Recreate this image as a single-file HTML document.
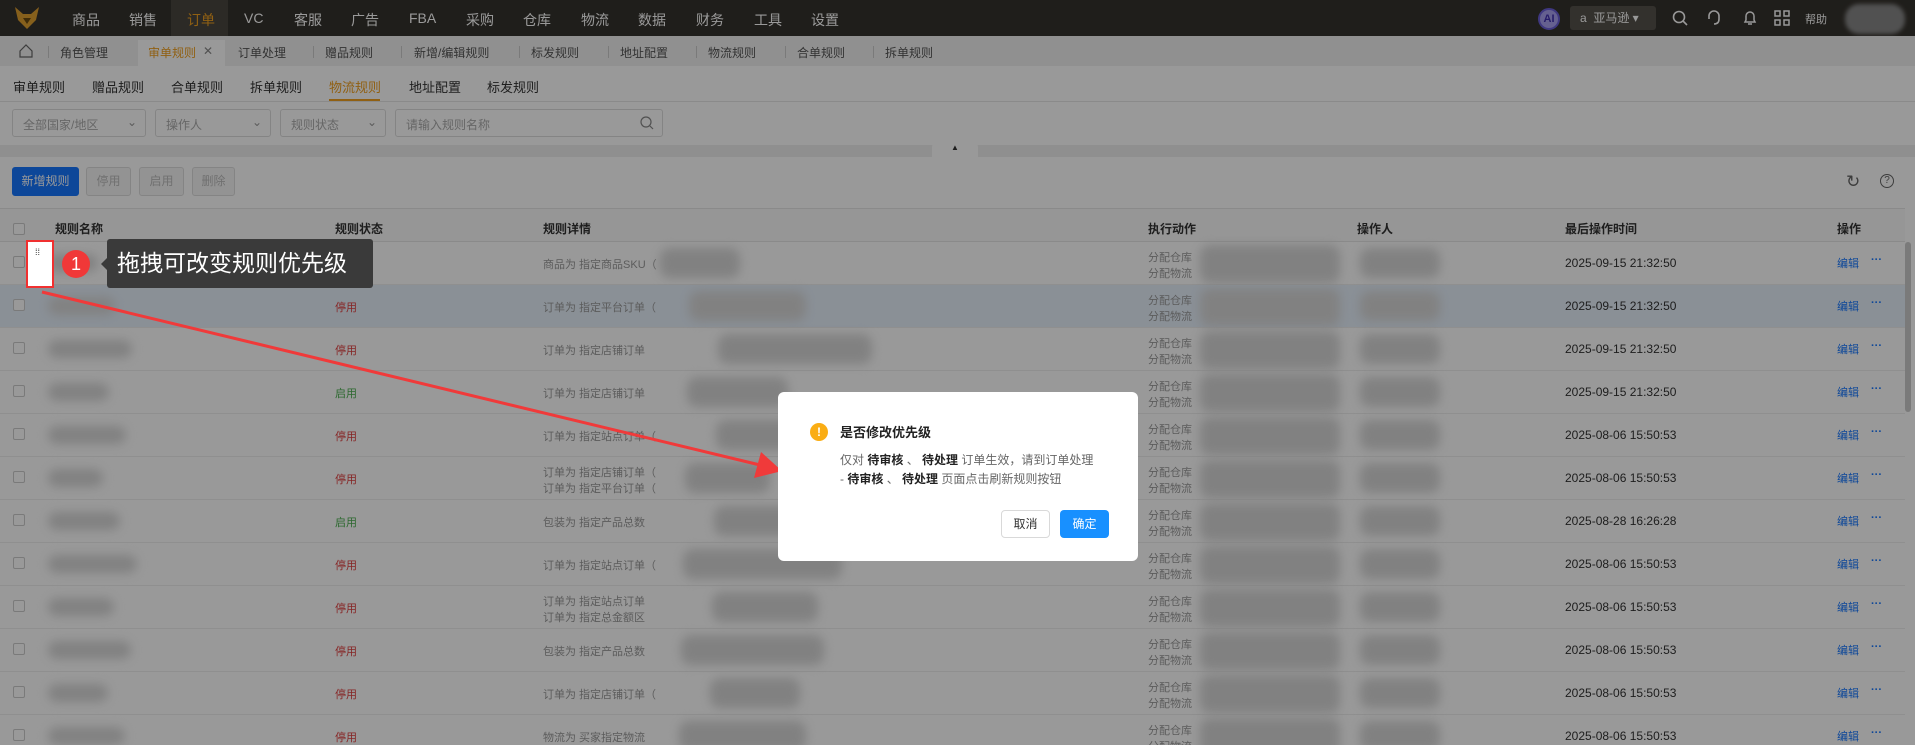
<!DOCTYPE html>
<html><head><meta charset="utf-8">
<style>
*{box-sizing:border-box;margin:0;padding:0}
html,body{width:1915px;height:745px;overflow:hidden}
body{position:relative;background:#fff;font-family:"Liberation Sans","Noto Sans CJK SC",sans-serif;font-size:12px;color:#333}
.a{position:absolute;white-space:nowrap}
.top{position:absolute;left:0;top:0;width:1915px;height:36px;background:#35322d}
.top .n{position:absolute;top:10px;color:#fff;font-size:14px}
.tabs{position:absolute;left:0;top:36px;width:1915px;height:30px;background:#f0f0f0}
.tabs .t{position:absolute;top:8px;color:#555;font-size:12px}
.sep{position:absolute;top:10px;width:1px;height:12px;background:#ccc}
.sub .t{position:absolute;top:77px;font-size:13px;color:#333}
.sel{position:absolute;top:109px;height:28px;border:1px solid #ddd;border-radius:3px;background:#fff;color:#aaa;font-size:12px;padding:6px 10px}
.btn{position:absolute;top:167px;height:29px;border:1px solid #ddd;border-radius:3px;background:#f5f5f5;color:#bbb;font-size:12px;text-align:center;line-height:27px}
.hd{position:absolute;top:208px;left:0;width:1905px;height:34px;background:#fafafa;border-top:1px solid #e6e6e6;border-bottom:1px solid #e6e6e6}
.hd span{position:absolute;top:11px;font-weight:bold;font-size:12px;color:#333}
.row{position:absolute;left:0;width:1905px;height:43px;border-bottom:1px solid #eee}
.row .cb,.hd .cb{position:absolute;left:13px;top:14px;width:12px;height:12px;border:1px solid #ccc;border-radius:2px;background:#fff}
.row span{position:absolute;font-size:11px;color:#999}
.blur{position:absolute;background:#d8d8d8;filter:blur(5px);border-radius:10px}
.mask{position:absolute;left:0;top:0;width:1915px;height:745px;background:rgba(0,0,0,0.4)}
</style></head><body>
<div class="top">
 <svg class="a" style="left:14px;top:6px" width="26" height="24" viewBox="0 0 26 24"><path d="M1 1 L9 8 L17 8 L25 1 L22 14 L13 23 L4 14 Z" fill="#e0a030"/><path d="M9 12 L13 18 L17 12" fill="#6a4a10"/></svg>
 <div class="a" style="left:171px;top:0;width:57px;height:36px;background:#4a4640"></div>
 <span class="n" style="left:72px">商品</span><span class="n" style="left:129px">销售</span><span class="n" style="left:187px;color:#f0a020">订单</span><span class="n" style="left:244px">VC</span><span class="n" style="left:294px">客服</span><span class="n" style="left:351px">广告</span><span class="n" style="left:409px">FBA</span><span class="n" style="left:466px">采购</span><span class="n" style="left:523px">仓库</span><span class="n" style="left:581px">物流</span><span class="n" style="left:638px">数据</span><span class="n" style="left:696px">财务</span><span class="n" style="left:754px">工具</span><span class="n" style="left:811px">设置</span>
 <div class="a" style="left:1538px;top:8px;width:22px;height:22px;border-radius:50%;background:#a8a0f0;border:2px solid #6a5ed8;color:#4030b0;font-size:11px;font-weight:bold;text-align:center;line-height:18px">AI</div>
 <div class="a" style="left:1570px;top:6px;width:86px;height:24px;background:#56524c;border-radius:3px;color:#fff;font-size:12px;line-height:24px;padding-left:10px">a&nbsp; 亚马逊 ▾</div>
 <svg class="a" style="left:1672px;top:10px" width="16" height="16"><circle cx="7" cy="7" r="5.5" fill="none" stroke="#fff" stroke-width="1.6"/><path d="M11 11 L15 15" stroke="#fff" stroke-width="1.6"/></svg>
 <svg class="a" style="left:1706px;top:9px" width="16" height="18"><path d="M3 10 V7 A5 5 0 0 1 13 7 V10 M13 10 Q13 15 8 15" fill="none" stroke="#fff" stroke-width="1.6"/></svg>
 <svg class="a" style="left:1742px;top:9px" width="16" height="18"><path d="M3 13 H13 L12 11 V7 A4 4 0 0 0 4 7 V11 Z M6 15 H10" fill="none" stroke="#fff" stroke-width="1.5"/></svg>
 <svg class="a" style="left:1774px;top:10px" width="16" height="16" fill="none" stroke="#fff" stroke-width="1.5"><rect x="1" y="1" width="5" height="5"/><rect x="10" y="1" width="5" height="5"/><rect x="1" y="10" width="5" height="5"/><rect x="10" y="10" width="5" height="5"/></svg>
 <span class="n" style="left:1805px;top:11px;font-size:11px">帮助</span>
 <div class="a" style="left:1845px;top:4px;width:60px;height:30px;border-radius:14px;background:#888;filter:blur(2px)"></div>
</div>
<div class="tabs">
 <svg class="a" style="left:19px;top:8px" width="14" height="14"><path d="M1 7 L7 1 L13 7 V13 H1 Z" fill="none" stroke="#666" stroke-width="1.2"/></svg>
 <div class="sep" style="left:48px"></div>
 <span class="t" style="left:60px">角色管理</span>
 <div class="a" style="left:138px;top:4px;width:87px;height:26px;background:#fff"></div>
 <span class="t" style="left:148px;color:#f0a020">审单规则</span><span class="t" style="left:203px;color:#888">✕</span>
 <span class="t" style="left:238px">订单处理</span><div class="sep" style="left:313px"></div>
 <span class="t" style="left:325px">赠品规则</span><div class="sep" style="left:401px"></div>
 <span class="t" style="left:414px">新增/编辑规则</span><div class="sep" style="left:519px"></div>
 <span class="t" style="left:531px">标发规则</span><div class="sep" style="left:608px"></div>
 <span class="t" style="left:620px">地址配置</span><div class="sep" style="left:696px"></div>
 <span class="t" style="left:708px">物流规则</span><div class="sep" style="left:785px"></div>
 <span class="t" style="left:797px">合单规则</span><div class="sep" style="left:873px"></div>
 <span class="t" style="left:885px">拆单规则</span>
</div>
<div class="sub">
 <span class="t" style="left:13px">审单规则</span><span class="t" style="left:92px">赠品规则</span><span class="t" style="left:171px">合单规则</span><span class="t" style="left:250px">拆单规则</span><span class="t" style="left:329px;color:#f0a020">物流规则</span><span class="t" style="left:409px">地址配置</span><span class="t" style="left:487px">标发规则</span>
 <div class="a" style="left:329px;top:99px;width:51px;height:2px;background:#f0a020"></div>
 <div class="a" style="left:0;top:101px;width:1915px;height:1px;background:#e6e6e6"></div>
</div>
<div class="sel" style="left:12px;width:134px">全部国家/地区<span class="a" style="right:8px;top:5px;color:#999">⌄</span></div>
<div class="sel" style="left:155px;width:116px">操作人<span class="a" style="right:8px;top:5px;color:#999">⌄</span></div>
<div class="sel" style="left:280px;width:106px">规则状态<span class="a" style="right:8px;top:5px;color:#999">⌄</span></div>
<div class="sel" style="left:395px;width:268px">请输入规则名称
 <svg class="a" style="right:8px;top:6px" width="14" height="14"><circle cx="6" cy="6" r="5" fill="none" stroke="#888" stroke-width="1.2"/><path d="M10 10 L13 13" stroke="#888" stroke-width="1.2"/></svg></div>
<div class="a" style="left:0;top:145px;width:1915px;height:12px;background:#eeeeee"></div>
<div class="a" style="left:932px;top:143px;width:46px;height:14px;background:#fff;border-radius:4px 4px 0 0;color:#333;font-size:8px;text-align:center">▲</div>
<div class="btn" style="left:12px;width:67px;background:#1677ff;border-color:#1677ff;color:#fff">新增规则</div>
<div class="btn" style="left:86px;width:45px">停用</div>
<div class="btn" style="left:139px;width:45px">启用</div>
<div class="btn" style="left:192px;width:43px">删除</div>
<div class="a" style="left:1846px;top:172px;font-size:17px;color:#666">↻</div>
<div class="a" style="left:1880px;top:174px;width:14px;height:14px;border:1.3px solid #666;border-radius:50%;font-size:10px;text-align:center;line-height:12px;color:#666">?</div>
<div class="hd"><div class="cb"></div>
 <span style="left:55px">规则名称</span><span style="left:335px">规则状态</span><span style="left:543px">规则详情</span><span style="left:1148px">执行动作</span><span style="left:1357px">操作人</span><span style="left:1565px">最后操作时间</span><span style="left:1837px">操作</span></div>
<div id="rows"></div>
<script>
var d=[["","商品为 指定商品SKU（","2025-09-15 21:32:50"],["停用","订单为 指定平台订单（","2025-09-15 21:32:50"],["停用","订单为 指定店铺订单","2025-09-15 21:32:50"],["启用","订单为 指定店铺订单","2025-09-15 21:32:50"],["停用","订单为 指定站点订单（","2025-08-06 15:50:53"],["停用","订单为 指定店铺订单（|订单为 指定平台订单（","2025-08-06 15:50:53"],["启用","包装为 指定产品总数","2025-08-28 16:26:28"],["停用","订单为 指定站点订单（","2025-08-06 15:50:53"],["停用","订单为 指定站点订单|订单为 指定总金额区","2025-08-06 15:50:53"],["停用","包装为 指定产品总数","2025-08-06 15:50:53"],["停用","订单为 指定店铺订单（","2025-08-06 15:50:53"],["停用","物流为 买家指定物流","2025-08-06 15:50:53"]];
var h="";
d.forEach(function(r,i){var y=242+i*43;var det=r[1].split("|");
h+='<div class="row" style="top:'+y+'px;'+(i==1?'background:#e6f0fb':'')+'"><div class="cb"></div>';
h+='<div class="blur" style="left:48px;top:12px;width:'+(50+(i*17)%40)+'px;height:18px"></div>';
if(r[0])h+='<span style="left:335px;top:14px;color:'+(r[0]=="启用"?"#4caf50":"#e04040")+'">'+r[0]+'</span>';
h+='<span style="left:543px;top:'+(det.length>1?7:14)+'px">'+det[0]+'</span>';
if(det[1])h+='<span style="left:543px;top:23px">'+det[1]+'</span>';
h+='<div class="blur" style="left:'+(660+(i*29)%60)+'px;top:6px;width:'+(80+(i*37)%90)+'px;height:30px"></div>';
h+='<span style="left:1148px;top:7px">分配仓库</span><span style="left:1148px;top:23px">分配物流</span>';
h+='<div class="blur" style="left:1200px;top:3px;width:140px;height:38px"></div>';
h+='<div class="blur" style="left:1360px;top:6px;width:80px;height:30px"></div>';
h+='<span style="left:1565px;top:14px;color:#333;font-size:12px">'+r[2]+'</span>';
h+='<span style="left:1837px;top:13px;color:#1677ff">编辑</span><span style="left:1871px;top:12px;color:#1677ff;font-weight:bold">···</span></div>';});
document.getElementById("rows").innerHTML=h;
</script>
<div class="a" style="left:1905px;top:242px;width:6px;height:170px;background:#ccc;border-radius:3px"></div>
<div class="mask"></div>
<div class="a" style="left:26px;top:240px;width:28px;height:48px;border:2px solid #f03030;background:#fff"></div>
<div class="a" style="left:35px;top:250px;font-size:9px;color:#333;line-height:5px">⁞⁞</div>
<div class="a" style="left:62px;top:250px;width:28px;height:28px;border-radius:50%;background:#f03838;color:#fff;font-size:18px;text-align:center;line-height:28px">1</div>
<div class="a" style="left:101px;top:258px;width:0;height:0;border-top:6px solid transparent;border-bottom:6px solid transparent;border-right:6px solid #3a3a3a"></div>
<div class="a" style="left:107px;top:239px;width:266px;height:49px;background:#3a3a3a;border-radius:3px;color:#fff;font-size:23px;line-height:49px;padding-left:10px">拖拽可改变规则优先级</div>
<svg class="a" style="left:0;top:0" width="1915" height="745"><line x1="42" y1="292" x2="760" y2="465" stroke="#f03a3a" stroke-width="3"/><path d="M782 471 L754 478 L761 452 Z" fill="#f03a3a"/></svg>
<div class="a" style="left:778px;top:392px;width:360px;height:169px;background:#fff;border-radius:6px"></div>
<div class="a" style="left:810px;top:423px;width:18px;height:18px;border-radius:50%;background:#faad14;color:#fff;font-weight:bold;font-size:12px;text-align:center;line-height:18px">!</div>
<div class="a" style="left:840px;top:422px;font-size:13px;font-weight:bold;color:#222">是否修改优先级</div>
<div class="a" style="left:840px;top:451px;font-size:12px;color:#666;line-height:19px">仅对 <b style="color:#222">待审核</b> 、 <b style="color:#222">待处理</b> 订单生效，请到订单处理<br>- <b style="color:#222">待审核</b> 、 <b style="color:#222">待处理</b> 页面点击刷新规则按钮</div>
<div class="a" style="left:1001px;top:510px;width:49px;height:28px;border:1px solid #d9d9d9;border-radius:4px;font-size:12px;text-align:center;line-height:26px;color:#333">取消</div>
<div class="a" style="left:1060px;top:510px;width:49px;height:28px;background:#1890ff;border-radius:4px;font-size:12px;text-align:center;line-height:28px;color:#fff">确定</div>
</body></html>
